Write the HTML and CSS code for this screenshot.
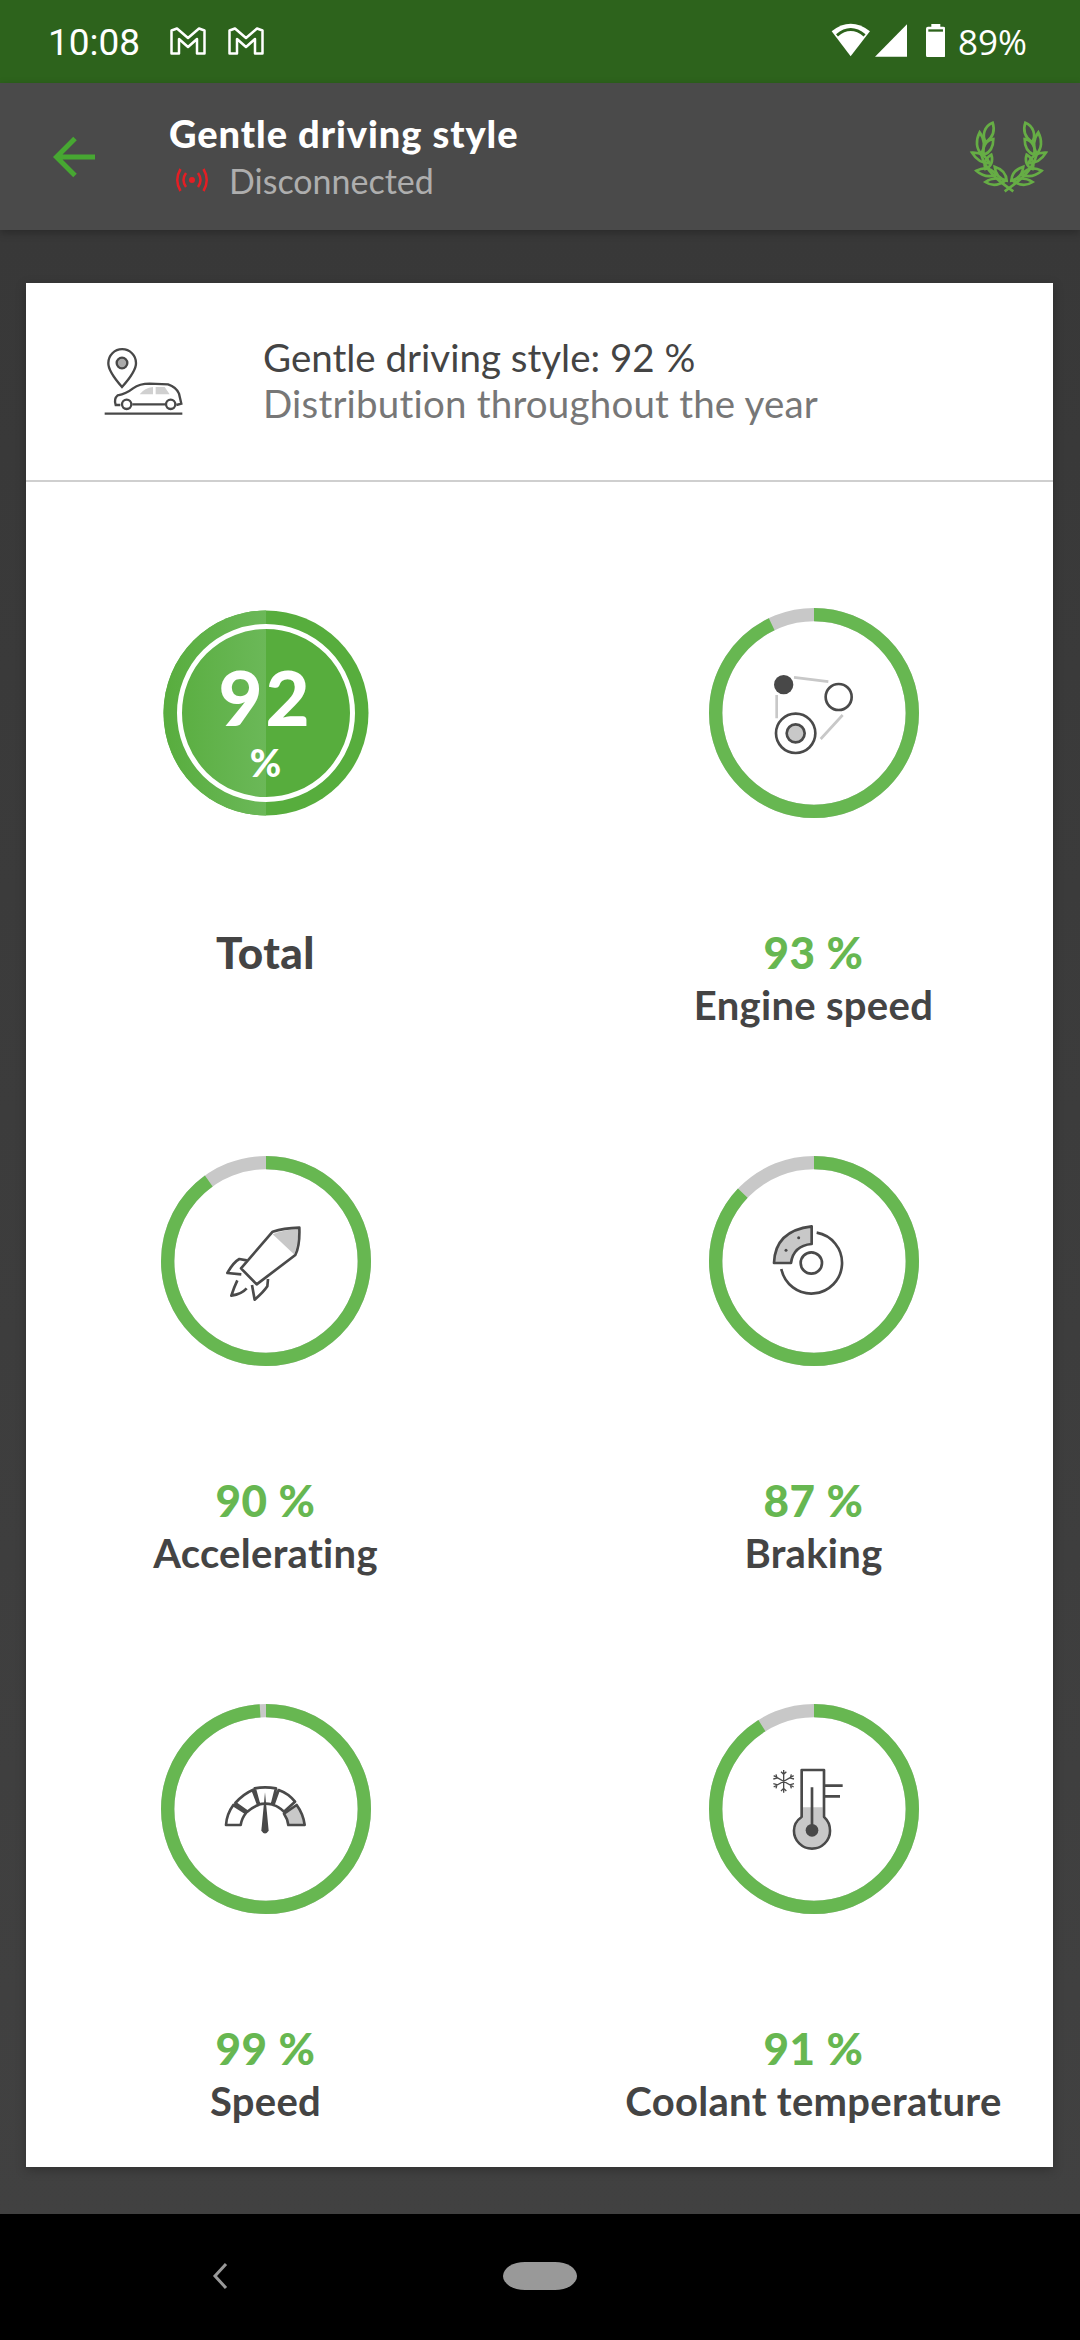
FILE: index.html
```html
<!DOCTYPE html>
<html lang="en">
<head>
<meta charset="utf-8">
<title>Gentle driving style</title>
<link rel="stylesheet" href="styles.css">
</head>
<body>
<div class="screen">
  <header class="status">
    <span class="time">10:08</span>
    <svg class="mail" viewBox="0 0 36 28"><path d="M1.5 3.5 7 1.5 18 11 29 1.5 34.5 3.5V26.5H27V12L18 20 9 12V26.5H1.500Z"/></svg>
    <svg class="mail second" viewBox="0 0 36 28"><path d="M1.5 3.5 7 1.5 18 11 29 1.5 34.5 3.5V26.5H27V12L18 20 9 12V26.5H1.500Z"/></svg>
    <span class="spacer"></span>
    <svg class="wifi" viewBox="155 70 125 105"><path class="w" d="M160 95Q217 50 275 95L217 170Z"/><path class="gap" d="M176 107Q217 72 259 107"/></svg>
    <svg class="signal" viewBox="288 73 95 97"><path class="w" d="M288 170 383 73V170Z"/></svg>
    <svg class="battery" viewBox="442 73 58 100"><path class="w" d="M458 73H485V81H494Q500 81 500 87V167Q500 173 494 173H448Q442 173 442 167V87Q442 81 448 81H458Z"/><path class="gapfill" d="M449 89H493V96H449Z"/></svg>
    <span class="battery-text">89%</span>
  </header>

  <nav class="toolbar">
    <svg class="back" viewBox="0 0 42 42"><path d="M42 21H4M22 2.500 3.500 21 22 39.500"/></svg>
    <div class="titles">
      <div class="title">Gentle driving style</div>
      <div class="sub">
        <svg class="radio" viewBox="0 0 34 24"><circle cx="17" cy="12" r="3"/><path d="M11 5Q6 12 11 19M23 5Q28 12 23 19M5.500 1Q-1 12 5.500 23M28.500 1Q35 12 28.500 23"/></svg>
        <span>Disconnected</span>
      </div>
    </div>
    <svg class="laurel" viewBox="560 355 250 230">
      <defs>
        <g id="branch">
          <path d="M634 366C610 375 600 405 614 425C635 410 642 390 634 366Z"/>
          <path d="M595 395C582 420 585 445 600 460C612 440 610 415 595 395Z"/>
          <path d="M636 415C612 420 602 440 608 462C628 455 636 438 636 415Z"/>
          <path d="M572 456C585 478 602 488 625 488C615 465 597 455 572 456Z"/>
          <path d="M630 462C612 472 606 490 612 505C628 500 637 482 630 462Z"/>
          <path d="M585 510C605 528 625 530 645 522C628 500 608 498 585 510Z"/>
          <path d="M640 498C642 520 655 535 676 540C675 520 662 505 640 498Z"/>
          <path d="M612 544C630 556 650 556 672 540C650 530 630 532 612 544Z"/>
          <path d="M600 462C612 510 650 540 696 572"/>
        </g>
      </defs>
      <use href="#branch"/>
      <use href="#branch" transform="translate(1366 0) scale(-1 1)"/>
    </svg>
  </nav>

  <main class="content">
    <section class="card">
      <div class="card-head">
        <svg class="head-icon" viewBox="250 230 240 210">
          <path class="o" d="M307 350Q265 302 266 278A41 41 0 0 1 349 278Q350 302 307 350Z"/>
          <circle class="o g" cx="307" cy="278" r="16"/>
          <path class="win" d="M360 372Q375 352 400 350V372ZM408 350H435L450 372H408Z"/>
          <path class="o" d="M302 404H288Q282 385 294 375Q320 370 340 354Q360 340 390 340L445 342Q470 350 478 370L485 400L470 404M338 402H436"/>
          <circle class="o" cx="321" cy="402" r="14"/>
          <circle class="o" cx="453" cy="402" r="14"/>
          <path class="o" d="M255 430H488"/>
        </svg>
        <div class="head-text">
          <div class="head-line">Gentle driving style: 92 %</div>
          <div class="head-sub">Distribution throughout the year</div>
        </div>
      </div>

      <div class="grid">
        <div class="item">
          <div class="total">
            <svg class="ring" viewBox="0 0 210 210">
              <defs><linearGradient id="half"><stop offset="0" stop-color="#58ad3e"/><stop offset="1" stop-color="#6bb858"/></linearGradient></defs>
              <circle cx="105" cy="105" r="102.500" fill="#57ad3d"/>
              <path d="M105 2.500A102.500 102.500 0 0 0 105 207.500Z" fill="url(#half)"/>
              <circle cx="105" cy="105" r="86.500" fill="none" stroke="#fff" stroke-width="5"/>
            </svg>
            <span class="total-num">92</span>
            <span class="total-pct">%</span>
          </div>
          <div class="pct dark">Total</div>
        </div>

        <div class="item">
          <svg class="ring" viewBox="57 57 630 630">
            <circle class="track" cx="372" cy="372" r="295"/>
            <circle class="arc" cx="372" cy="372" r="295" pathLength="100" stroke-dasharray="92.800 100" transform="rotate(-90 372 372)"/>
            <path class="gl" d="M312 265 415 278M260 318V388M458 378 392 450"/>
            <circle class="fd" cx="281" cy="287" r="29"/>
            <circle class="ln" cx="446" cy="324" r="39"/>
            <circle class="ln" cx="317" cy="433" r="59"/>
            <circle class="ln g" cx="317" cy="433" r="27"/>
          </svg>
          <div class="pct">93 %</div>
          <div class="label">Engine speed</div>
        </div>

        <div class="item">
          <svg class="ring" viewBox="63 51 630 630">
            <circle class="track" cx="378" cy="366" r="295"/>
            <circle class="arc" cx="378" cy="366" r="295" pathLength="100" stroke-dasharray="90 100" transform="rotate(-90 378 366)"/>
            <path class="fg" d="M398 286Q430 272 474 270Q476 318 462 346Z"/>
            <path class="ln" d="M398 278Q430 268 478 266Q480 320 466 348L350 436 303 388ZM320 364 298 360Q280 370 262 402L304 406M384 420 382 442Q370 460 344 482L336 438M292 424Q282 445 274 470Q305 465 320 448"/>
          </svg>
          <div class="pct">90 %</div>
          <div class="label">Accelerating</div>
        </div>

        <div class="item">
          <svg class="ring" viewBox="57 51 630 630">
            <circle class="track" cx="372" cy="366" r="295"/>
            <circle class="arc" cx="372" cy="366" r="295" pathLength="100" stroke-dasharray="87 100" transform="rotate(-90 372 366)"/>
            <path class="ln" d="M380 281A92 92 0 1 1 274 390"/>
            <circle class="ln" cx="364" cy="372" r="32"/>
            <path class="ln g" d="M365 262V315Q310 320 303 372H252Q255 275 365 262Z"/>
            <circle class="fd" cx="326" cy="296" r="4.500"/>
            <circle class="fd" cx="288" cy="334" r="4.500"/>
          </svg>
          <div class="pct">87 %</div>
          <div class="label">Braking</div>
        </div>

        <div class="item">
          <svg class="ring" viewBox="63 45 630 630">
            <circle class="track" cx="378" cy="360" r="295"/>
            <circle class="arc" cx="378" cy="360" r="295" pathLength="100" stroke-dasharray="98.900 100" transform="rotate(-90 378 360)"/>
            <path class="ln" d="M258 408Q260 375 280 348L318 372Q305 388 302 408ZM286 342Q310 315 338 303L355 348Q338 355 322 368ZM344 298Q375 292 408 298L396 346Q375 342 357 346ZM416 303Q445 313 465 338L432 368Q415 352 400 348Z"/>
            <path class="ln g" d="M470 348Q490 375 494 408H445Q443 390 432 374Z"/>
            <path class="fd" d="M375 310 386 425Q375 442 364 425Z"/>
          </svg>
          <div class="pct">99 %</div>
          <div class="label">Speed</div>
        </div>

        <div class="item">
          <svg class="ring" viewBox="57 45 630 630">
            <circle class="track" cx="372" cy="360" r="295"/>
            <circle class="arc" cx="372" cy="360" r="295" pathLength="100" stroke-dasharray="91 100" transform="rotate(-90 372 360)"/>
            <path class="fg" d="M339 355H398V386Q416 402 416 425A50 50 0 1 1 316 425Q316 402 339 386Z"/>
            <path class="ln" d="M335 243H402V384Q420 400 420 425A54 54 0 1 1 312 425Q312 400 335 384ZM366 295V420M402 290H458M402 322H450"/>
            <circle class="fd" cx="366" cy="424" r="19"/>
            <path class="snow" d="M281 243V311M251 260 311 294M251 294 311 260M273 248 281 256 289 248M273 306 281 298 289 306M250 270 261 267 258 256M312 284 301 287 304 298M250 284 261 287 258 298M312 270 301 267 304 256"/>
          </svg>
          <div class="pct">91 %</div>
          <div class="label">Coolant temperature</div>
        </div>
      </div>
    </section>
  </main>

  <footer class="navbar">
    <svg class="nav-back" viewBox="0 0 16 28"><path d="M14 2 3 14 14 26"/></svg>
    <span class="nav-home"></span>
  </footer>
</div>
</body>
</html>
```

FILE: styles.css
```css
* { box-sizing: border-box; }
html, body { margin: 0; padding: 0; }
body { font-family: "Lato", "Noto Sans", sans-serif; background: #000; }
.screen { width: 1080px; height: 2340px; display: flex; flex-direction: column; overflow: hidden; }

.status { height: 83px; flex: none; background: #2d631c; display: flex; align-items: center; padding: 0 53px 0 48px; color: #fff; }
.time { font: 400 37px/1 "Roboto", sans-serif; width: 122px; margin-top: 1px; }
.mail { width: 36px; height: 28px; margin-bottom: 2px; fill: none; stroke: #fff; stroke-width: 2.500; stroke-linejoin: round; }
.mail.second { margin-left: 22px; }
.spacer { flex: 1; }
.wifi { width: 41.600px; height: 35px; margin-bottom: 2px; }
.signal { width: 32px; height: 33px; margin-left: 3px; margin-bottom: 2px; }
.battery { width: 19.300px; height: 33.300px; margin-left: 19px; margin-bottom: 2px; }
.w { fill: #fff; }
.gap { fill: none; stroke: #2d631c; stroke-width: 9; }
.gapfill { fill: #2d631c; }
.battery-text { font: 400 35px/1 "Open Sans", sans-serif; margin-left: 13px; }

.toolbar { height: 147px; flex: none; background: #4a4a4a; display: flex; align-items: center; padding: 0 29px 0 53px; box-shadow: 0 3px 8px rgba(0,0,0,.25); position: relative; }
.back { width: 42px; height: 42px; fill: none; stroke: #47a732; stroke-width: 5; }
.titles { margin-left: 74px; flex: 1; }
.title { font-size: 38px; line-height: 47px; font-weight: 900; letter-spacing: .95px; color: #fff; }
.sub { display: flex; align-items: center; font-size: 34px; line-height: 47px; color: #aeaeae; }
.radio { width: 34px; height: 24px; margin-left: 6px; margin-right: 20px; fill: #e31e24; }
.radio path { fill: none; stroke: #e31e24; stroke-width: 2.500; }
.laurel { width: 83.300px; height: 76.700px; margin-top: 1px; }
.laurel path { fill: none; stroke: #66ad45; stroke-width: 8; }

.content { flex: 1; min-height: 0; background: linear-gradient(#383838, #414141); padding: 53px 27px 47px 26px; }
.card { height: 100%; background: #fff; box-shadow: 0 3px 10px rgba(0,0,0,.25); display: flex; flex-direction: column; }
.card-head { height: 199px; flex: none; border-bottom: 2px solid #cfcfcf; display: flex; align-items: center; padding-left: 77px; }
.head-icon { width: 80px; height: 70px; fill: none; }
.head-icon .o { fill: none; stroke: #484848; stroke-width: 7; }
.head-icon .o.g { fill: #aaa; }
.head-icon .win { fill: #d0d0d0; }
.head-text { margin-left: 80px; margin-top: -2px; }
.head-line { font-size: 38.500px; line-height: 46px; color: #444; }
.head-sub { font-size: 38.500px; line-height: 47px; letter-spacing: .2px; color: #777; }

.grid { flex: 1; display: grid; grid-template-columns: 400px 400px; column-gap: 148px; justify-content: center; align-content: start; row-gap: 124px; padding-top: 126px; }
.item { display: flex; flex-direction: column; align-items: center; }
.ring { width: 210px; height: 210px; display: block; }
.track { fill: none; stroke: #c8c8c8; stroke-width: 40; }
.arc { fill: none; stroke: #67b751; stroke-width: 40; }
.gl { fill: none; stroke: #c8c8c8; stroke-width: 8; }
.fd { fill: #484848; }
.fg { fill: #c8c8c8; }
.ln { fill: none; stroke: #4a4a4a; stroke-width: 8; stroke-linejoin: round; }
.ln.g { fill: #c8c8c8; }
.snow { fill: none; stroke: #4a4a4a; stroke-width: 4; }

.total { position: relative; width: 210px; height: 210px; color: #fff; }
.total-num { position: absolute; left: 0; right: 0; top: 57px; text-align: center; font-size: 76px; line-height: 64px; font-weight: 900; letter-spacing: 3px; }
.total-pct { position: absolute; left: 0; right: 0; top: 132px; text-align: center; font-size: 38px; line-height: 44px; font-weight: 900; }

.pct { margin-top: 108px; font-size: 44px; line-height: 53px; font-weight: 900; letter-spacing: .5px; color: #67b751; }
.pct.dark { color: #444; }
.label { font-size: 40px; line-height: 53px; font-weight: 700; letter-spacing: .3px; color: #444; }

.navbar { height: 126px; flex: none; background: #000; display: flex; align-items: center; padding-left: 212px; padding-bottom: 2px; }
.nav-back { width: 16px; height: 28px; fill: none; stroke: #999; stroke-width: 3; }
.nav-home { width: 74px; height: 28px; margin-left: 275px; border-radius: 22px / 14px; background: #999; }
```
